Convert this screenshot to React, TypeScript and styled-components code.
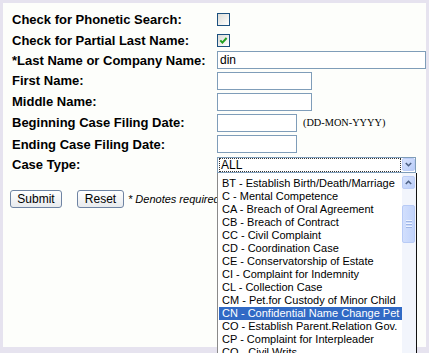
import styled, { createGlobalStyle } from "styled-components";

const caseTypes = [
  "BT - Establish Birth/Death/Marriage",
  "C - Mental Competence",
  "CA - Breach of Oral Agreement",
  "CB - Breach of Contract",
  "CC - Civil Complaint",
  "CD - Coordination Case",
  "CE - Conservatorship of Estate",
  "CI - Complaint for Indemnity",
  "CL - Collection Case",
  "CM - Pet.for Custody of Minor Child",
  "CN - Confidential Name Change Pet",
  "CO - Establish Parent.Relation Gov.",
  "CP - Complaint for Interpleader",
  "CQ - Civil Writs",
  "CR - Civil Rights",
];

const GlobalStyle = createGlobalStyle`
  html, body {
    margin: 0;
    background: #e6e3ef;
    font-family: "Liberation Sans", Arial, sans-serif;
  }
`;

const Chevron = ({ up }: { up?: boolean }) => (
  <svg width="7" height="5" viewBox="0 0 7 5">
    <path
      d={up ? "M0.8 4 L3.5 1.3 L6.2 4" : "M0.8 1 L3.5 3.7 L6.2 1"}
      fill="none"
      stroke="#4d6185"
      strokeWidth="1.6"
    />
  </svg>
);

const App = () => {
  return (
    <Page>
      <GlobalStyle />
      <Panel>
        <FormGrid>
          <Label>Check for Phonetic Search:</Label>
          <Field>
            <CheckBox />
          </Field>

          <Label>Check for Partial Last Name:</Label>
          <Field>
            <CheckBox>
              <svg width="11" height="11" viewBox="0 0 11 11">
                <path
                  d="M2.3 5.4 L4.4 7.6 L8.6 3"
                  fill="none"
                  stroke="#21a121"
                  strokeWidth="2"
                />
              </svg>
            </CheckBox>
          </Field>

          <Label>*Last Name or Company Name:</Label>
          <Field>
            <TextBox $width="100%" defaultValue="din" />
          </Field>

          <Label>First Name:</Label>
          <Field>
            <TextBox $width="95px" />
          </Field>

          <Label>Middle Name:</Label>
          <Field>
            <TextBox $width="95px" />
          </Field>

          <Label>Beginning Case Filing Date:</Label>
          <Field>
            <TextBox $width="80px" />
            <DateHint>(DD-MON-YYYY)</DateHint>
          </Field>

          <Label>Ending Case Filing Date:</Label>
          <Field>
            <TextBox $width="80px" />
          </Field>

          <Label>Case Type:</Label>
          <Field>
            <SelectWrap>
              <SelectBox>
                <FocusValue>ALL</FocusValue>
                <ArrowButton>
                  <Chevron />
                </ArrowButton>
              </SelectBox>

              <OptionList>
                <OptionColumn>
                  {caseTypes.map((type) => (
                    <OptionItem
                      key={type}
                      $active={type.startsWith("CN -")}
                    >
                      {type}
                    </OptionItem>
                  ))}
                </OptionColumn>
                <ScrollBar>
                  <ArrowButton>
                    <Chevron up />
                  </ArrowButton>
                  <ScrollThumb>
                    <Grip />
                    <Grip />
                    <Grip />
                  </ScrollThumb>
                </ScrollBar>
              </OptionList>
            </SelectWrap>
          </Field>
        </FormGrid>

        <ButtonRow>
          <PushButton $width="52px">Submit</PushButton>
          <PushButton $width="47px">Reset</PushButton>
          <RequiredNote>* Denotes required field</RequiredNote>
        </ButtonRow>
      </Panel>
    </Page>
  );
};

export default App;

const Page = styled.div`
  height: 353px;
  padding: 3px 3px 0 3px;
  box-sizing: border-box;
  overflow: hidden;
`;

const Panel = styled.div`
  width: 423px;
  height: 344px;
  background: #fdfefb;
  padding: 5px 0 0 9px;
  box-sizing: border-box;
`;

const FormGrid = styled.div`
  display: grid;
  grid-template-columns: 205px 1fr;
  grid-template-rows: 22px 20px 20px 21px 21px 21px 22px 19px;
`;

const Label = styled.div`
  display: flex;
  align-items: center;
  font-size: 13px;
  font-weight: bold;
  color: #000;
  white-space: nowrap;
`;

const Field = styled.div`
  display: flex;
  align-items: center;
`;

const CheckBox = styled.div`
  width: 13px;
  height: 13px;
  box-sizing: border-box;
  border: 1px solid #1c5180;
  background: linear-gradient(135deg, #dcdcd7, #ffffff);
  display: flex;
  align-items: center;
  justify-content: center;
`;

const TextBox = styled.input<{ $width: string }>`
  width: ${(props) => props.$width};
  height: 18px;
  box-sizing: border-box;
  border: 1px solid #7f9db9;
  padding: 0 2px;
  margin: 0;
  font-family: "Liberation Sans", Arial, sans-serif;
  font-size: 12px;
  color: #000;
  background: #fff;
  outline: none;
`;

const DateHint = styled.span`
  margin-left: 6px;
  font-family: "Liberation Serif", "Times New Roman", serif;
  font-size: 10.3px;
  color: #000;
`;

const SelectWrap = styled.div`
  position: relative;
  width: 199px;
`;

const SelectBox = styled.div`
  height: 16px;
  box-sizing: border-box;
  border: 1px solid #7f9db9;
  background: #fff;
  display: flex;
  align-items: stretch;
`;

const FocusValue = styled.div`
  flex: 1;
  margin: 0 1px 0 1px;
  border: 1px dotted #333;
  font-size: 12px;
  line-height: 12px;
  padding-left: 1px;
  color: #000;
`;

const ArrowButton = styled.div`
  width: 13px;
  height: 13px;
  flex-shrink: 0;
  margin: 0 0 0 0;
  box-sizing: border-box;
  border: 1px solid #bccdf6;
  border-radius: 2px;
  background: linear-gradient(135deg, #d8e3fd, #b9cdf9);
  display: flex;
  align-items: center;
  justify-content: center;
`;

const OptionList = styled.div`
  position: absolute;
  top: 100%;
  left: 0;
  width: 200px;
  height: 190px;
  box-sizing: border-box;
  border-left: 1px solid #8a8a8a;
  border-right: 1px solid #111;
  background: #fff;
  display: flex;
  z-index: 2;
`;

const OptionColumn = styled.div`
  flex: 1;
  padding: 4px 0 0 1px;
`;

const OptionItem = styled.div<{ $active: boolean }>`
  height: 13px;
  line-height: 13px;
  padding-left: 3px;
  font-size: 11px;
  white-space: nowrap;
  background: ${(props) => (props.$active ? "#316ac5" : "transparent")};
  color: ${(props) => (props.$active ? "#fff" : "#000")};
`;

const ScrollBar = styled.div`
  width: 14px;
  background: #f2f5fc;
  padding-top: 3px;
  display: flex;
  flex-direction: column;
  align-items: flex-start;
`;

const ScrollThumb = styled.div`
  margin-top: 16px;
  width: 13px;
  height: 38px;
  box-sizing: border-box;
  border: 1px solid #b8cbf6;
  border-radius: 2px;
  background: linear-gradient(90deg, #d2dffd, #c2d4fb);
  display: flex;
  flex-direction: column;
  align-items: center;
  justify-content: center;
  gap: 1px;
`;

const Grip = styled.div`
  width: 6px;
  height: 1px;
  background: #eef3ff;
  border-bottom: 1px solid #9fb6e6;
`;

const ButtonRow = styled.div`
  display: flex;
  align-items: center;
  margin: 16px 0 0 -2px;
  gap: 0;
`;

const PushButton = styled.button<{ $width: string }>`
  width: ${(props) => props.$width};
  height: 18px;
  margin: 0 15px 0 0;
  padding: 0;
  box-sizing: border-box;
  border: 1px solid #6f84a3;
  border-radius: 3px;
  background: linear-gradient(#ffffff, #e8ebee);
  font-family: "Liberation Sans", Arial, sans-serif;
  font-size: 12px;
  color: #000;

  &:last-of-type {
    margin-right: 4px;
  }
`;

const RequiredNote = styled.span`
  font-size: 11px;
  font-style: italic;
  color: #000;
  white-space: nowrap;
`;
